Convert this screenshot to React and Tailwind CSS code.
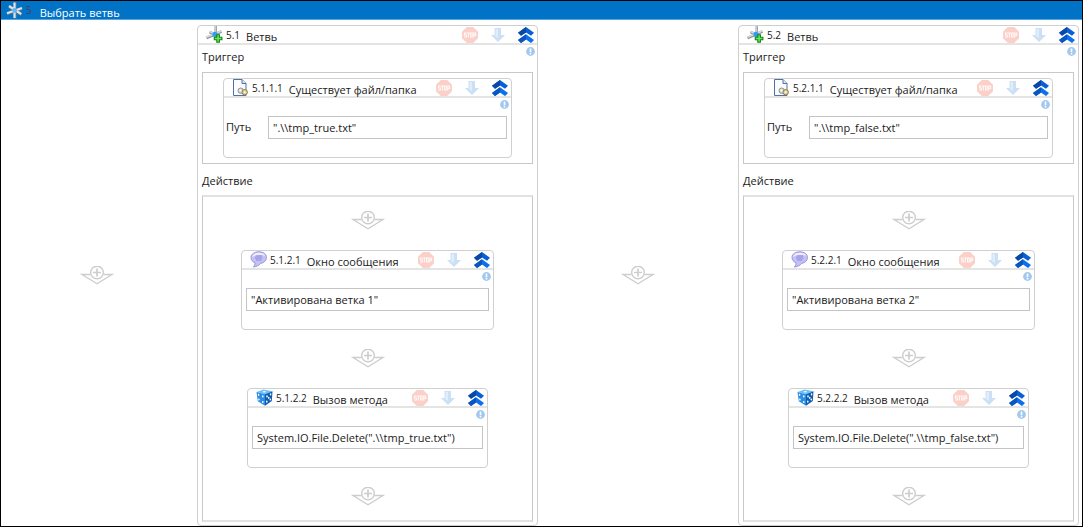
import React from "react";

function SwitchIcon() {
  return (
    <svg viewBox="0 0 17 17" className="size-[17px] shrink-0" fill="none" aria-hidden="true">
      <path d="M9.200 .5V16.500M1 12 16 6.800M3 4.800 15.500 12.800" stroke="#66788c" strokeWidth="2.600" />
      <path d="M8.500 .5V16M1 11.200 16 6M3 4 15.200 12" stroke="#e2e2e2" strokeWidth="2.200" />
      <circle cx="8.700" cy="8.500" r="2.400" fill="#5cb6f5" />
    </svg>
  );
}

function BranchIcon() {
  return (
    <svg viewBox="0 0 17 17" className="size-[17px] shrink-0" aria-hidden="true">
      <path d="M9.500 0V12M.5 12 15.500 5.500M3.500 6 13 10.500" stroke="#8a9096" strokeWidth="2.600" fill="none" />
      <path d="M9 0V12M.5 11.300 15.500 4.900M3.500 5.500 12 9.500" stroke="#d6d9dc" strokeWidth="1.600" fill="none" />
      <circle cx="9" cy="8.300" r="2.600" fill="#2c9df2" />
      <path d="M10.800 8.700h2.600v2.500h2.500v2.600h-2.500v2.500h-2.600v-2.500H8.300v-2.600h2.500z" fill="#6fe660" stroke="#118411" strokeWidth="1.100" />
    </svg>
  );
}

function FileIcon() {
  return (
    <svg viewBox="0 0 17 17" className="size-[17px] shrink-0" aria-hidden="true">
      <path d="M1.500 .5H10l4 4v12H1.500z" fill="#fafcff" stroke="#53709f" />
      <path d="M10 .5v4h4" fill="#dce7f7" stroke="#53709f" />
      <circle cx="8.700" cy="11.700" r="2.700" fill="#dcdcd6" stroke="#92928c" />
      <circle cx="12.700" cy="13.200" r="2.700" fill="#e6cd85" stroke="#8c7f5c" />
      <circle cx="12.700" cy="13.200" r=".9" fill="#fff" />
      <circle cx="8.500" cy="11.500" r=".9" fill="#fff" />
    </svg>
  );
}

function MessageIcon() {
  return (
    <svg viewBox="0 0 17 17" className="size-[17px] shrink-0" aria-hidden="true">
      <path d="M9 .8C4.500 .8 1 3 1 6.500c0 2.400 1.500 4.400 4 5.300 .3 1.600-.3 2.900-1.600 4.200 3.200-.4 5.600-1.400 7.200-3.600 3.400-.5 5.900-2.900 5.900-5.900C16.500 3 13.300 .8 9 .8z" fill="#c4c1f5" stroke="#9490d6" strokeWidth=".9" />
      <path d="M2.200 6C2.500 3.400 5.200 1.800 9 1.800c3.300 0 5.500 1.100 6.300 3C11 3.500 6 4 2.200 6z" fill="#eeecff" />
      <path d="M5.500 5h6.500M5 7h7.500M6 9h5.500" stroke="#7f7ad0" strokeWidth=".8" />
    </svg>
  );
}

function DiceIcon() {
  return (
    <svg viewBox="0 0 17 17" className="size-[17px] shrink-0" aria-hidden="true">
      <path d="M.5 3 7.500 .5l9 1.700L9 5.200z" fill="#6cc1f8" />
      <path d="M.5 3 9 5.200v11.500L1.800 12.200z" fill="#2a8fe2" />
      <path d="M16.500 2.200 9 5.200v11.500l6.800-4.700z" fill="#0d5cb4" />
      <g fill="#fff">
        <ellipse cx="8.300" cy="2.700" rx="1.500" ry=".7" />
        <ellipse cx="2.600" cy="5.800" rx=".8" ry="1.100" />
        <ellipse cx="6.800" cy="7.400" rx=".8" ry="1.100" />
        <ellipse cx="2.900" cy="10.600" rx=".8" ry="1.100" />
        <ellipse cx="6.800" cy="13" rx=".8" ry="1.100" />
        <ellipse cx="11" cy="7.400" rx=".8" ry="1.100" />
        <ellipse cx="14.600" cy="5.400" rx=".8" ry="1.100" />
        <ellipse cx="12.700" cy="8.800" rx=".8" ry="1.100" />
        <ellipse cx="10.800" cy="12.700" rx=".8" ry="1.100" />
        <ellipse cx="14.300" cy="10.500" rx=".8" ry="1.100" />
      </g>
    </svg>
  );
}

function StopIcon() {
  return (
    <svg viewBox="0 0 16 16" className="size-4" aria-hidden="true">
      <path d="M4.800 0h6.400L16 4.800v6.400L11.200 16H4.800L0 11.200V4.800z" fill="#fbd0c9" />
      <g fill="none" stroke="#fff8f6" strokeWidth="1.100">
        <path d="M4.700 6H2.500v2h1.900v2H2.100M5 6h2.800M6.400 6v4.500M8.500 6h1.700v4H8.500zM11.700 10.500V6h1.900v2.400h-1.900" />
      </g>
    </svg>
  );
}

function ArrowIcon() {
  return (
    <svg viewBox="0 0 16 16" className="size-4" aria-hidden="true">
      <path d="M4.500 1h6.500v7h4L8 15 1 8h3.500z" fill="#cbdff5" />
      <path d="M5.500 2h2.500v9L4 8.500h1.500z" fill="#e0edfa" />
    </svg>
  );
}

function CollapseIcon() {
  return (
    <svg viewBox="0 0 16 16" className="size-4" aria-hidden="true">
      <path d="M8 0 16 5.800 13 8.800 8 5.400 3 8.800 0 5.800z" fill="#0b5fd4" />
      <path d="M8 0v5.400L3 8.800 0 5.800z" fill="#0a48a6" />
      <path d="M8 7.200 16 13 13 16 8 12.600 3 16 0 13z" fill="#0c70ee" />
      <path d="M8 7.200v5.400L3 16 0 13z" fill="#0a55be" />
    </svg>
  );
}

function InfoIcon() {
  return (
    <svg viewBox="0 0 9 9" className="block size-[9px]" aria-hidden="true">
      <circle cx="4.500" cy="4.500" r="4.400" fill="#a3c8ee" />
      <path d="M3.700 1.500h1.600v3.800H3.700zM3.700 6h1.600v1.500H3.700z" fill="#fff" />
    </svg>
  );
}

function DropPoint() {
  return (
    <svg viewBox="0 1 34 20" className="h-5 w-[34px] shrink-0" fill="none" stroke="#cdcdcd" strokeWidth="1.400" role="img" aria-label="+">
      <path d="M10.500 9.500H2L17 18.800 32 9.500h-8.500" />
      <circle cx="17" cy="7.500" r="6.300" />
      <path d="M17 3.500v8M13 7.500h8" strokeWidth="1.700" />
    </svg>
  );
}

function Header({ icon, number, title }) {
  return (
    <header className="flex h-[19px] items-center border-b-2 border-[#e4e4e4] pr-[3px] pl-2">
      {icon}
      <span className="ml-[3px] pt-px text-[10px] leading-4">{number}</span>
      <h2 className="ml-1.5 pt-1 whitespace-nowrap leading-4">{title}</h2>
      <div className="ml-auto flex gap-3">
        <button type="button" aria-label="Stop"><StopIcon /></button>
        <button type="button" aria-label="Step"><ArrowIcon /></button>
        <button type="button" aria-label="Collapse"><CollapseIcon /></button>
      </div>
    </header>
  );
}

function Card({ icon, number, title, label, value, width }) {
  return (
    <article className={"relative h-20 rounded border border-[#d0d0d0] " + width}>
      <Header icon={icon} number={number} title={title} />
      <div className="absolute top-[21px] right-[2px]"><InfoIcon /></div>
      <label className={"mt-[18px] mr-1 flex items-center " + (label ? "ml-0.5" : "ml-1")}>
        {label && <span className="w-[42px] shrink-0">{label}</span>}
        <input
          type="text"
          defaultValue={value}
          aria-label={label || title}
          className="h-[23px] w-full min-w-0 border border-[#c4c4c4] px-1 outline-none"
        />
      </label>
    </article>
  );
}

function Branch({ n, file, message }) {
  return (
    <section className="relative w-[341px] shrink-0 rounded border border-[#cfcfcf] px-1 pb-[3px]">
      <div className="-mx-1">
        <Header icon={<BranchIcon />} number={"5." + n} title="Ветвь" />
      </div>
      <div className="absolute top-[21px] right-[2px]"><InfoIcon /></div>
      <h3 className="mt-1 mb-[7px] leading-4">Триггер</h3>
      <div className="flex h-[92px] justify-center border border-[#c8c8c8] pt-[5px]">
        <Card icon={<FileIcon />} number={`5.${n}.1.1`} title="Существует файл/папка" label="Путь" value={`".\\\\${file}"`} width="w-[289px]" />
      </div>
      <h3 className="mt-[9px] mb-[6px] leading-4">Действие</h3>
      <div className="flex flex-col items-center border-x border-y-2 border-x-[#c8c8c8] border-y-[#e2e2e2] pt-[14px] pb-[13px]">
        <DropPoint />
        <div className="py-[19px]">
          <Card icon={<MessageIcon />} number={`5.${n}.2.1`} title="Окно сообщения" value={`"${message}"`} width="w-[253px]" />
        </div>
        <DropPoint />
        <div className="py-[19px]">
          <Card icon={<DiceIcon />} number={`5.${n}.2.2`} title="Вызов метода" value={`System.IO.File.Delete(".\\\\${file}")`} width="w-[241px]" />
        </div>
        <DropPoint />
      </div>
    </section>
  );
}

function DropZone() {
  return (
    <div className="flex flex-1 items-center justify-center">
      <DropPoint />
    </div>
  );
}

export default function App() {
  return (
    <main className="min-h-screen border border-black bg-white font-['Open_Sans','Noto_Sans',sans-serif] text-[11px] text-[#1a1a1a]">
      <header className="flex h-[19px] items-center border-b border-[#5aa5dd] bg-[#0173c7] pl-[5px]">
        <SwitchIcon />
        <span className="ml-[3px] text-[10px] leading-4 text-[#4b3a60]">5</span>
        <h1 className="ml-2 pt-1.5 leading-4 text-white">Выбрать ветвь</h1>
      </header>
      <div className="flex gap-1 pt-[5px] pr-[3px]">
        <DropZone />
        <Branch n={1} file="tmp_true.txt" message="Активирована ветка 1" />
        <DropZone />
        <Branch n={2} file="tmp_false.txt" message="Активирована ветка 2" />
      </div>
    </main>
  );
}
